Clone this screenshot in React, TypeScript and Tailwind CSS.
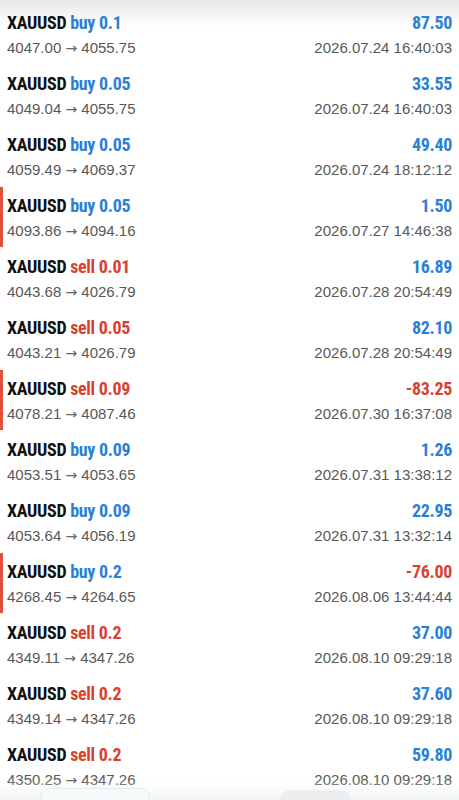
import React from "react";

type Trade = {
  side: "buy" | "sell";
  lot: string;
  open: string;
  close: string;
  profit: string;
  time: string;
  bar?: boolean;
};

const trades: Trade[] = [
  { side: "buy", lot: "0.1", open: "4047.00", close: "4055.75", profit: "87.50", time: "2026.07.24 16:40:03" },
  { side: "buy", lot: "0.05", open: "4049.04", close: "4055.75", profit: "33.55", time: "2026.07.24 16:40:03" },
  { side: "buy", lot: "0.05", open: "4059.49", close: "4069.37", profit: "49.40", time: "2026.07.24 18:12:12" },
  { side: "buy", lot: "0.05", open: "4093.86", close: "4094.16", profit: "1.50", time: "2026.07.27 14:46:38", bar: true },
  { side: "sell", lot: "0.01", open: "4043.68", close: "4026.79", profit: "16.89", time: "2026.07.28 20:54:49" },
  { side: "sell", lot: "0.05", open: "4043.21", close: "4026.79", profit: "82.10", time: "2026.07.28 20:54:49" },
  { side: "sell", lot: "0.09", open: "4078.21", close: "4087.46", profit: "-83.25", time: "2026.07.30 16:37:08", bar: true },
  { side: "buy", lot: "0.09", open: "4053.51", close: "4053.65", profit: "1.26", time: "2026.07.31 13:38:12" },
  { side: "buy", lot: "0.09", open: "4053.64", close: "4056.19", profit: "22.95", time: "2026.07.31 13:32:14" },
  { side: "buy", lot: "0.2", open: "4268.45", close: "4264.65", profit: "-76.00", time: "2026.08.06 13:44:44", bar: true },
  { side: "sell", lot: "0.2", open: "4349.11", close: "4347.26", profit: "37.00", time: "2026.08.10 09:29:18" },
  { side: "sell", lot: "0.2", open: "4349.14", close: "4347.26", profit: "37.60", time: "2026.08.10 09:29:18" },
  { side: "sell", lot: "0.2", open: "4350.25", close: "4347.26", profit: "59.80", time: "2026.08.10 09:29:18" },
];

const cond = { fontFamily: '"Liberation Sans Narrow", "Roboto Condensed", Roboto, sans-serif' };
const reg = { fontFamily: '"Liberation Sans", Arial, sans-serif' };
const arrow = { fontFamily: '"DejaVu Sans", sans-serif' };

function Row({ t }: { t: Trade }) {
  const neg = t.profit.startsWith("-");
  return (
    <div className="relative h-[61px] pl-[7px] pr-[7px] pt-[8px]">
      {t.bar && <div className="absolute left-0 top-0 h-[60px] w-[3px] bg-[#e0503c]" />}
      <div className="flex items-center justify-between leading-[22px] text-[18px] font-bold tracking-[-0.3px]" style={cond}>
        <div>
          <span className="text-[#111111]">XAUUSD</span>{" "}
          <span className={t.side === "buy" ? "text-[#2a7fd6]" : "text-[#d9412f]"}>
            {t.side} {t.lot}
          </span>
        </div>
        <span className={neg ? "text-[#d9412f]" : "text-[#2a7fd6]"}>{t.profit}</span>
      </div>
      <div className="mt-[4px] flex items-center justify-between leading-[20px] text-[15px] text-[#585858]" style={reg}>
        <span>
          {t.open}{" "}
          <span className="text-[14px] text-[#666666]" style={arrow}>
            →
          </span>{" "}
          {t.close}
        </span>
        <span>{t.time}</span>
      </div>
    </div>
  );
}

export default function App() {
  return (
    <div className="relative h-[800px] w-[459px] overflow-hidden bg-white">
      <div className="pointer-events-none absolute left-0 right-0 top-0 h-[26px] bg-gradient-to-b from-[#e8e8e8] to-transparent" />
      <div className="relative pt-[4px]">
        {trades.map((t, i) => (
          <Row key={i} t={t} />
        ))}
      </div>
      <div className="pointer-events-none absolute bottom-0 left-0 right-0 h-[20px] bg-gradient-to-b from-[#ffffff00] to-[#f3f6f7]">
        <div className="absolute bottom-[-6px] left-[40px] h-[18px] w-[110px] rounded-full border border-[#e4ecef] bg-[#f7fafb]" />
        <div className="absolute bottom-[-8px] left-[280px] h-[18px] w-[70px] rounded-full bg-[#eceeef]" />
      </div>
    </div>
  );
}
